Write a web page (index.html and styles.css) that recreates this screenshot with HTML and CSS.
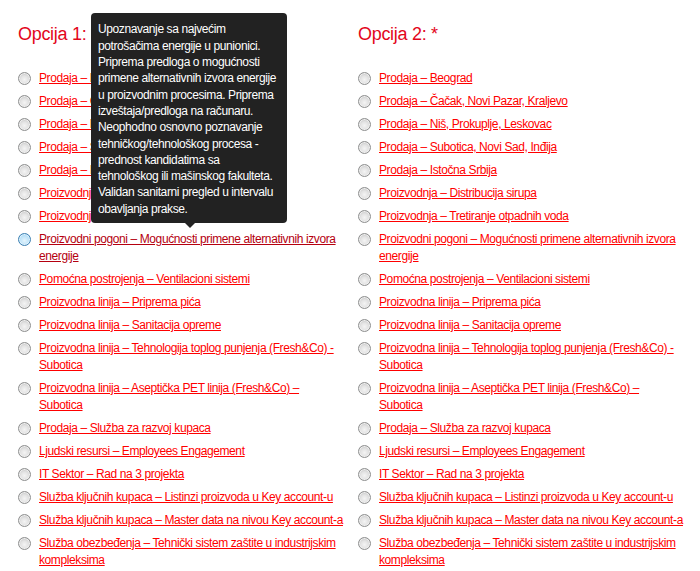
FILE: index.html
```html
<!DOCTYPE html>
<html lang="sr">
<head>
    <meta charset="UTF-8">
    <title>Prijava za praksu - opcije</title>
    <link rel="stylesheet" href="styles.css">
</head>
<body>
    <form class="options">
        <!-- Opcija 1 -->
        <div class="option-col">
            <h2 class="option-title">Opcija 1: *</h2>
            <ul class="choice-list">
                <li><span class="radio"></span><a href="#">Prodaja – Beograd</a></li>
                <li><span class="radio"></span><a href="#">Prodaja – Čačak, Novi Pazar, Kraljevo</a></li>
                <li><span class="radio"></span><a href="#">Prodaja – Niš, Prokuplje, Leskovac</a></li>
                <li><span class="radio"></span><a href="#">Prodaja – Subotica, Novi Sad, Inđija</a></li>
                <li><span class="radio"></span><a href="#">Prodaja – Istočna Srbija</a></li>
                <li><span class="radio"></span><a href="#">Proizvodnja – Distribucija sirupa</a></li>
                <li><span class="radio"></span><a href="#">Proizvodnja – Tretiranje otpadnih voda</a></li>
                <li class="hover">
                    <span class="radio"></span>
                    <a href="#">Proizvodni pogoni – Mogućnosti primene alternativnih izvora energije</a>
                    <div class="tooltip">Upoznavanje sa najvećim potrošačima energije u punionici. Priprema predloga o mogućnosti primene alternativnih izvora energije u proizvodnim procesima. Priprema izveštaja/predloga na računaru. Neophodno osnovno poznavanje tehničkog/tehnološkog procesa - prednost kandidatima sa tehnološkog ili mašinskog fakulteta. Validan sanitarni pregled u intervalu obavljanja prakse.</div>
                </li>
                <li><span class="radio"></span><a href="#">Pomoćna postrojenja – Ventilacioni sistemi</a></li>
                <li><span class="radio"></span><a href="#">Proizvodna linija – Priprema pića</a></li>
                <li><span class="radio"></span><a href="#">Proizvodna linija – Sanitacija opreme</a></li>
                <li><span class="radio"></span><a href="#">Proizvodna linija – Tehnologija toplog punjenja (Fresh&amp;Co) - Subotica</a></li>
                <li><span class="radio"></span><a href="#">Proizvodna linija – Aseptička PET linija (Fresh&amp;Co) – Subotica</a></li>
                <li><span class="radio"></span><a href="#">Prodaja – Služba za razvoj kupaca</a></li>
                <li><span class="radio"></span><a href="#">Ljudski resursi – Employees Engagement</a></li>
                <li><span class="radio"></span><a href="#">IT Sektor – Rad na 3 projekta</a></li>
                <li><span class="radio"></span><a href="#">Služba ključnih kupaca – Listinzi proizvoda u Key account-u</a></li>
                <li><span class="radio"></span><a href="#">Služba ključnih kupaca – Master data na nivou Key account-a</a></li>
                <li><span class="radio"></span><a href="#">Služba obezbeđenja – Tehnički sistem zaštite u industrijskim kompleksima</a></li>
            </ul>
        </div>

        <!-- Opcija 2 -->
        <div class="option-col">
            <h2 class="option-title">Opcija 2: *</h2>
            <ul class="choice-list">
                <li><span class="radio"></span><a href="#">Prodaja – Beograd</a></li>
                <li><span class="radio"></span><a href="#">Prodaja – Čačak, Novi Pazar, Kraljevo</a></li>
                <li><span class="radio"></span><a href="#">Prodaja – Niš, Prokuplje, Leskovac</a></li>
                <li><span class="radio"></span><a href="#">Prodaja – Subotica, Novi Sad, Inđija</a></li>
                <li><span class="radio"></span><a href="#">Prodaja – Istočna Srbija</a></li>
                <li><span class="radio"></span><a href="#">Proizvodnja – Distribucija sirupa</a></li>
                <li><span class="radio"></span><a href="#">Proizvodnja – Tretiranje otpadnih voda</a></li>
                <li><span class="radio"></span><a href="#">Proizvodni pogoni – Mogućnosti primene alternativnih izvora energije</a></li>
                <li><span class="radio"></span><a href="#">Pomoćna postrojenja – Ventilacioni sistemi</a></li>
                <li><span class="radio"></span><a href="#">Proizvodna linija – Priprema pića</a></li>
                <li><span class="radio"></span><a href="#">Proizvodna linija – Sanitacija opreme</a></li>
                <li><span class="radio"></span><a href="#">Proizvodna linija – Tehnologija toplog punjenja (Fresh&amp;Co) - Subotica</a></li>
                <li><span class="radio"></span><a href="#">Proizvodna linija – Aseptička PET linija (Fresh&amp;Co) – Subotica</a></li>
                <li><span class="radio"></span><a href="#">Prodaja – Služba za razvoj kupaca</a></li>
                <li><span class="radio"></span><a href="#">Ljudski resursi – Employees Engagement</a></li>
                <li><span class="radio"></span><a href="#">IT Sektor – Rad na 3 projekta</a></li>
                <li><span class="radio"></span><a href="#">Služba ključnih kupaca – Listinzi proizvoda u Key account-u</a></li>
                <li><span class="radio"></span><a href="#">Služba ključnih kupaca – Master data na nivou Key account-a</a></li>
                <li><span class="radio"></span><a href="#">Služba obezbeđenja – Tehnički sistem zaštite u industrijskim kompleksima</a></li>
            </ul>
        </div>
    </form>
</body>
</html>
```

FILE: styles.css
```css
body {
    font-family: "Liberation Sans", Arial, sans-serif;
    font-size: 12px;
    letter-spacing: -0.4px;
    margin: 0;
    padding: 0;
    background-color: #fff;
}
.options {
    display: grid;
    grid-template-columns: 340px 340px;
    padding: 24px 0 0 18px;
}
.option-title {
    margin: 0 0 25px 0;
    font-size: 18px;
    font-weight: normal;
    letter-spacing: -0.3px;
    line-height: 21px;
    color: #e3061b;
}
.choice-list {
    list-style: none;
    margin: 0;
    padding: 0;
}
.choice-list li {
    position: relative;
    display: flex;
    align-items: flex-start;
    gap: 8px;
    line-height: 17px;
    margin-bottom: 6px;
    padding-right: 14px;
}
.choice-list a {
    color: #ff0000;
    text-decoration: underline;
}
.radio {
    flex: none;
    box-sizing: border-box;
    width: 13px;
    height: 13px;
    margin-top: 2px;
    border: 1px solid #8e8f8f;
    border-radius: 50%;
    background: radial-gradient(circle at 50% 60%, #f4f4f4 0, #e2e2e2 45%, #c6c6c6 75%, #b9b9b9 100%);
    box-shadow: inset 0 0 0 1px #f0f0f0;
}
.hover .radio {
    border-color: #3c7fb1;
    background: radial-gradient(circle at 50% 60%, #e4f4fd 0, #bfe3f8 50%, #8ccaef 100%);
    box-shadow: inset 0 0 0 1px #def2fd;
}
.hover a {
    color: #b5000f;
}
.tooltip {
    position: absolute;
    left: 73px;
    bottom: calc(100% + 8px);
    width: 182px;
    padding: 8px 7px 6px 7px;
    background: #222;
    color: #fff;
    line-height: 16.3px;
    border-radius: 4px;
}
.tooltip::after {
    content: "";
    position: absolute;
    left: 94px;
    top: 100%;
    border-left: 5px solid transparent;
    border-right: 5px solid transparent;
    border-top: 5px solid #222;
}
```
